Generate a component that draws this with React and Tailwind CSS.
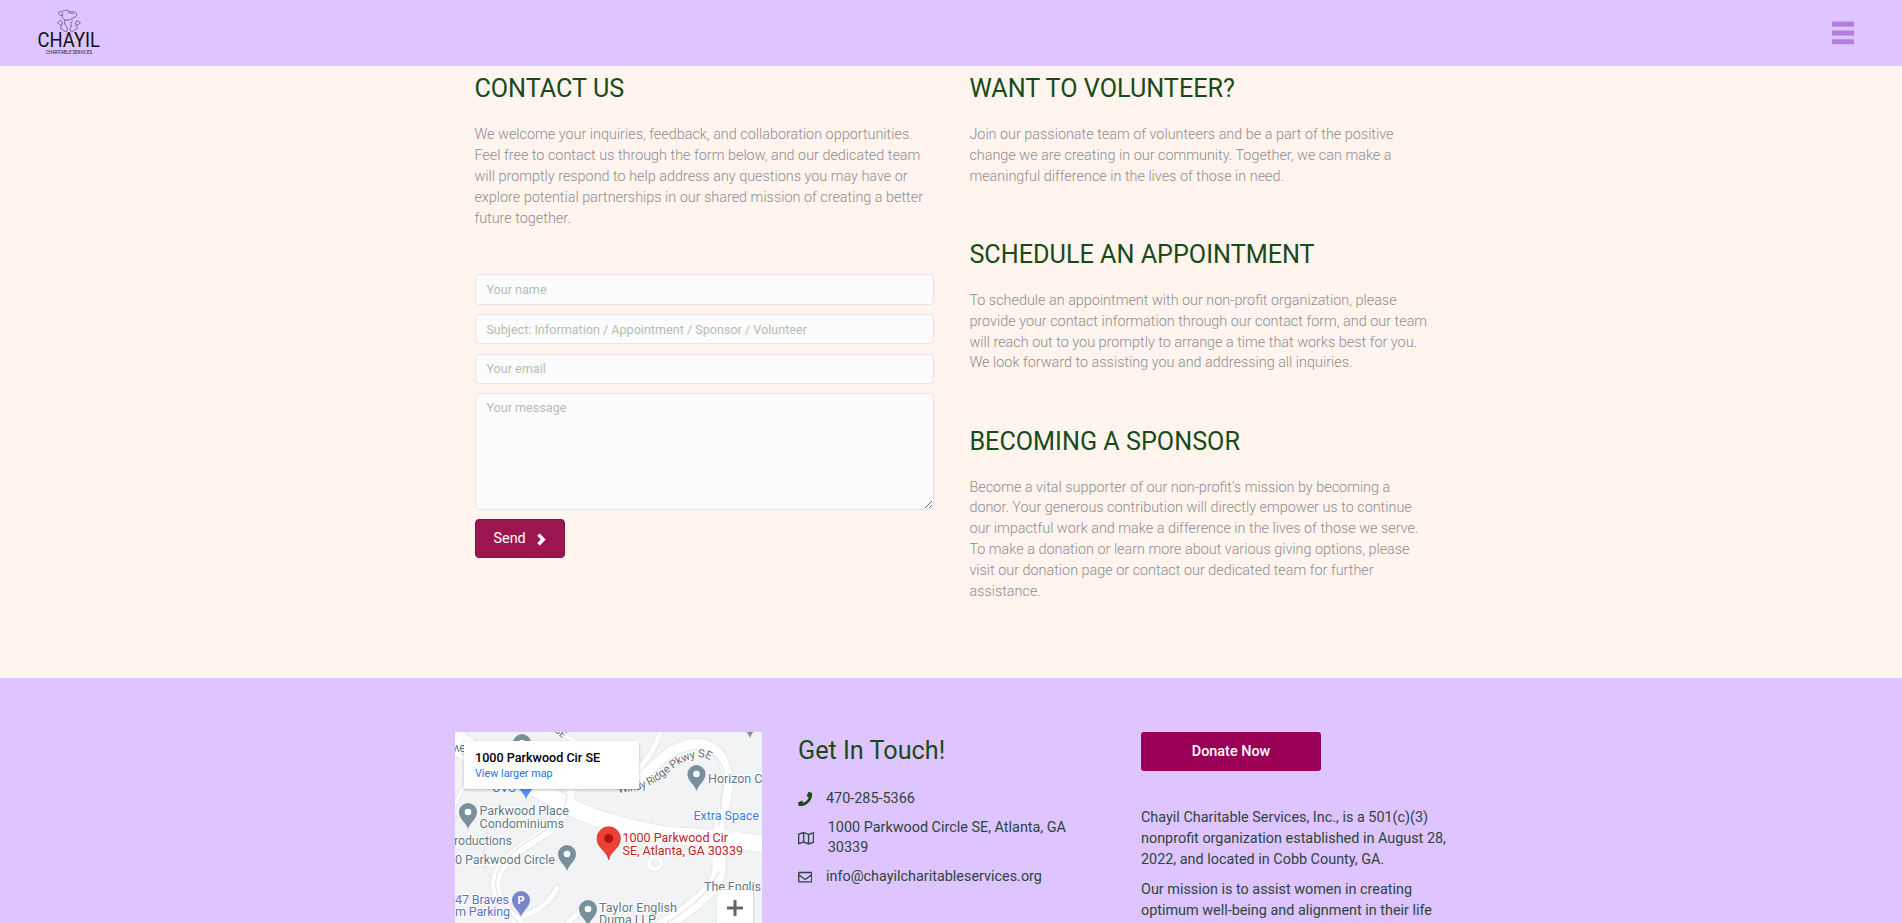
import React from "react";
import { FaPhone, FaRegMap, FaRegEnvelope } from "react-icons/fa";

const headingClass = "text-[25.2px] leading-[30px] text-[#194a19] whitespace-nowrap";
const copyClass = "pt-[21px] text-[14.4px] leading-[20.88px] font-light text-[#8e8e8e] whitespace-nowrap";
const fieldClass =
  "block w-full rounded-[4px] border border-[#e6e6e6] bg-[#fcfcfc] px-[10.4px] text-[12.6px] font-normal outline-none placeholder:text-[#b3bfb3] placeholder:opacity-100";

const contactCopy = [
  "We welcome your inquiries, feedback, and collaboration opportunities.",
  "Feel free to contact us through the form below, and our dedicated team",
  "will promptly respond to help address any questions you may have or",
  "explore potential partnerships in our shared mission of creating a better",
  "future together.",
];

const topics = [
  {
    title: "WANT TO VOLUNTEER?",
    lines: [
      "Join our passionate team of volunteers and be a part of the positive",
      "change we are creating in our community. Together, we can make a",
      "meaningful difference in the lives of those in need.",
    ],
  },
  {
    title: "SCHEDULE AN APPOINTMENT",
    lines: [
      "To schedule an appointment with our non-profit organization, please",
      "provide your contact information through our contact form, and our team",
      "will reach out to you promptly to arrange a time that works best for you.",
      "We look forward to assisting you and addressing all inquiries.",
    ],
  },
  {
    title: "BECOMING A SPONSOR",
    lines: [
      "Become a vital supporter of our non-profit's mission by becoming a",
      "donor. Your generous contribution will directly empower us to continue",
      "our impactful work and make a difference in the lives of those we serve.",
      "To make a donation or learn more about various giving options, please",
      "visit our donation page or contact our dedicated team for further",
      "assistance.",
    ],
  },
];

function TextBlock({ title, lines }) {
  return (
    <div>
      <h2 className={headingClass}>{title}</h2>
      <div className={copyClass}>
        {lines.map((line) => (
          <div key={line}>{line}</div>
        ))}
      </div>
    </div>
  );
}

function Logo() {
  return (
    <svg width="70" height="56" viewBox="34 4 70 56" fontFamily="Roboto, sans-serif">
      <g fill="none" stroke="#4a3d63" strokeWidth="0.7" strokeLinejoin="round">
        <path d="M62.500 15.500c-1.500.3-3.500-.5-4-2-.3-1.500 1.500-2.500 3-1.500.8-1 2.500-1.800 4.500-1.700 2 0 3.500.3 4.500 1.700 1.500-.8 3.500-.2 5.500.8.8.6.9 2.500.2 3.500-1.500 1.200-3.800 1.600-5.200 2.900-2 1.600-5.500 1.500-7.500-.2-1.200-1-1.500-2.200-1-3.500z" />
        <path d="M67.500 13.500c.8-1.700 3-1.500 3.300.1M71 14c.5-.8 2.500-.8 3 .3M62.500 15.500c.5-1.200.3-2-.5-3" />
        <path d="M65.500 19.800c-1.500 2.200-1.300 4 .5 6 1.500 1.800 2 3.500 1 5-1.500 1.500-3 .5-4-.8-1-1.200-2.800-.7-2.500-2.200l1-2.500c-1-.8-3-1-4-2.800.8-1.200 2.300-1.300 3.300-2.200.5 1 1.400 1.300 1.700 2.500l-1 2.500" />
        <path d="M72.800 20.300c-1.700 1.700-2.600 3.700-1.300 5.700-1.200 1.500-2.200 3.500-.8 4.800 1.500 1.500 3 .3 4-.8 1.200-1 3.200-.8 2.800-2.300l-1.300-2.300c1.200-.6 3-1 4.300-2.700-1-1-2.200-1-3.400-2-.8.800-1.500 1.200-1.700 2.400l.8 2.300" />
      </g>
      <text x="37.500" y="46.900" fontSize="19.400" textLength="62.500" lengthAdjust="spacingAndGlyphs" fill="#121016">CHAYIL</text>
      <text x="46" y="53.700" fontSize="4.700" textLength="46" lengthAdjust="spacingAndGlyphs" fill="#1d1726">CHARITABLE SERVICES</text>
    </svg>
  );
}

function Pin({ x, y, fill, letter }) {
  return (
    <g transform={`translate(${x} ${y})`}>
      <path d="M0 17.500C-.8 11.500-9 7.500-9 0a9 9 0 0 1 18 0C9 7.500.8 11.500 0 17.500z" fill={fill} />
      {letter ? (
        <text x="0" y="4" textAnchor="middle" fontSize="11" fontWeight="700" fill="#fff">{letter}</text>
      ) : (
        <circle r="3.300" fill="#fff" />
      )}
    </g>
  );
}

const roads = [
  { d: "M-6 2C30 24 60 45 84 58S130 84 154 90 200 103 221 104 280 107 312 113", w: 17 },
  { d: "M176 52C196 42 206 22 226 15S262 12 270 34 268 72 264 96V140", w: 10 },
  { d: "M264 100V138C262 156 240 176 196 200", w: 13 },
  { d: "M264 130V200", w: 9 },
  { d: "M206-2C202 12 196 22 185 36", w: 5 },
  { d: "M116 58C112 80 104 92 88 102S44 128 41 148 52 178 70 198", w: 9 },
  { d: "M102 156C94 172 84 178 64 186", w: 5 },
  { d: "M-4 18L8 26", w: 5 },
  { d: "M10 52L-3 78", w: 3 },
  { d: "M126 178L108 196", w: 5 },
  { d: "M104-3C110 6 124 10 132 18", w: 4 },
];

const placeLabels = [
  { t: "Parkwood Place", x: 24.500, y: 83.300, w: 89.500 },
  { t: "Condominiums", x: 24.500, y: 95.800, w: 84.500 },
  { t: "roductions", x: -1, y: 112.800, w: 58 },
  { t: "0 Parkwood Circle", x: 0, y: 131.800, w: 100 },
  { t: "Taylor English", x: 144, y: 180, w: 78 },
  { t: "Duma LLP", x: 144, y: 192, w: 57 },
  { t: "Horizon C", x: 253, y: 51, w: 54.500 },
  { t: "The Englis", x: 249, y: 159, w: 57 },
  { t: "we", x: -3, y: 20, w: 14 },
];

const haloProps = { stroke: "#ffffff", strokeWidth: 2, paintOrder: "stroke", strokeLinejoin: "round" };

function MapDrawing() {
  return (
    <svg className="block" width="307" height="191" viewBox="0 0 307 191" fontFamily="Roboto, sans-serif" fontSize="12.600">
      <rect width="307" height="191" fill="#f1f3f4" />
      <g fill="none" stroke="#e3e6e8" strokeWidth="1.200">
        <path d="M0 86c8-4 18-14 24-12s6 16 8 26-6 18-4 30 8 14 12 18" />
        <path d="M198 0v191M0 117h307" stroke="#eceeef" strokeWidth="0.800" />
      </g>
      <g fill="none" strokeLinejoin="round" strokeLinecap="round">
        {roads.map((r) => (
          <path key={r.d} d={r.d} stroke="#e2e5e8" strokeWidth={r.w + 1.500} />
        ))}
        <circle cx="200" cy="131" r="6" stroke="#e2e5e8" strokeWidth="5.500" />
        {roads.map((r) => (
          <path key={r.d} d={r.d} stroke="#ffffff" strokeWidth={r.w} />
        ))}
        <circle cx="200" cy="131" r="6" stroke="#ffffff" strokeWidth="4" />
        <path d="M112 62C110 82 102 92 86 101S43 128 41 148 52 178 70 198" stroke="#e2e5e8" strokeWidth="1.200" />
        <path d="M252 19C264 24 270 36 269 48S264 78 264 94M264 140C252 164 232 178 212 191" stroke="#e2e5e8" strokeWidth="1.200" />
      </g>

      <Pin x={67} y={11} fill="#78909c" />
      <Pin x={71} y={50} fill="#4f8ff7" />
      <Pin x={13} y={80} fill="#78909c" />
      <Pin x={112} y={122} fill="#78909c" />
      <Pin x={133} y={177} fill="#78909c" />
      <Pin x={241.500} y={42} fill="#78909c" />
      <Pin x={295} y={-11} fill="#78909c" />
      <Pin x={66} y={168} fill="#7986cb" letter="P" />

      <g fill="#607985" {...haloProps}>
        {placeLabels.map((l) => (
          <text key={l.t} x={l.x} y={l.y} textLength={l.w}>{l.t}</text>
        ))}
      </g>
      <g fill="#5f6fc4" {...haloProps}>
        <text x="0" y="171.500" textLength="54">47 Braves</text>
        <text x="0" y="184" textLength="55">m Parking</text>
      </g>
      <g fill="#2f80ee" {...haloProps}>
        <text x="238.500" y="88.300" textLength="65.500">Extra Space</text>
        <text x="37" y="60">CVS</text>
      </g>
      <path id="ridge-label" d="M163 61C188 59 198 53 209 44S229 28 240 26 252 27 264 33" fill="none" />
      <text fill="#686e73" fontSize="11.300" {...haloProps}>
        <textPath href="#ridge-label" textLength="102">Windy Ridge Pkwy SE</textPath>
      </text>
      <text fill="#686e73" fontSize="10" transform="translate(99 -1) rotate(42)" {...haloProps}>SE</text>

      <path d="M153.700 128c-.9-8.500-11.700-11.500-11.700-21.500a11.700 11.700 0 0 1 23.400 0c0 10-10.800 13-11.700 21.500z" fill="#ea4335" stroke="#c5221f" strokeWidth="0.600" />
      <circle cx="153.700" cy="106.500" r="4.500" fill="#b31412" />
      <g fill="#c5221f" {...haloProps}>
        <text x="167.500" y="110.300" textLength="105.500">1000 Parkwood Cir</text>
        <text x="167.500" y="122.800" textLength="120.500">SE, Atlanta, GA 30339</text>
      </g>
    </svg>
  );
}

function LocationMap() {
  return (
    <div className="relative h-[191px] w-[307px] shrink-0 overflow-hidden">
      <MapDrawing />
      <div className="absolute top-[9px] left-[9px] h-[48px] w-[175px] rounded-[2px] bg-white pt-[9px] pl-[11px] whitespace-nowrap shadow-[0_1px_3px_rgba(0,0,0,0.25)]">
        <div className="text-[12.6px] leading-[16px] font-medium text-black">1000 Parkwood Cir SE</div>
        <div className="text-[10.8px] leading-[15px] text-[#1a73e8]">View larger map</div>
      </div>
      <div className="absolute top-[158px] left-[262px] flex h-9 w-9 items-center justify-center rounded-[2px] bg-white shadow-[0_1px_3px_rgba(0,0,0,0.25)]">
        <svg width="16" height="16" viewBox="0 0 16 16">
          <path d="M8 0v16M0 8h16" stroke="#666" strokeWidth="3" />
        </svg>
      </div>
    </div>
  );
}

export default function App() {
  return (
    <div className="flex h-[923px] w-full flex-col overflow-hidden bg-[#fff4ee] font-['Roboto',sans-serif]">
      <header className="flex h-[66px] shrink-0 items-start justify-between bg-[#dec5ff]">
        <div className="pt-1 pl-[34px]">
          <Logo />
        </div>
        <button className="mt-[21px] mr-12 block">
          <svg className="block" width="22" height="24" viewBox="0 0 22 24" fill="#b57edc">
            <rect y="0.600" width="22" height="5.100" />
            <rect y="9.500" width="22" height="5.100" />
            <rect y="18.300" width="22" height="4.900" />
          </svg>
        </button>
      </header>

      <main className="flex h-[612px] shrink-0 justify-center pt-2">
        <div className="flex w-[992px] gap-9 pl-[19.4px]">
          <section className="w-[459.6px] shrink-0">
            <TextBlock title="CONTACT US" lines={contactCopy} />
            <form className="flex flex-col items-start gap-[9.3px] pt-[45px] pl-[0.6px]">
              <input className={fieldClass + " h-[30.3px]"} placeholder="Your name" />
              <input className={fieldClass + " h-[30.3px]"} placeholder="Subject: Information / Appointment / Sponsor / Volunteer" />
              <input className={fieldClass + " h-[30.3px]"} placeholder="Your email" />
              <textarea className={fieldClass + " h-[116.700px] resize pt-[5px] leading-[18.9px]"} placeholder="Your message" />
              <button type="button" className="flex h-[39px] w-[90px] items-center rounded-[4px] border border-[#86103f] bg-[#9b154e] pt-px pl-[17.5px] text-[14.4px] text-white">
                <span className="w-[43.5px] text-left">Send</span>
                <svg width="9" height="13" viewBox="0 0 9 13">
                  <path d="M1.500 1.600L6.200 6.500L1.500 11.400" fill="none" stroke="#fff" strokeWidth="3.500" />
                </svg>
              </button>
            </form>
          </section>
          <section className="-ml-[0.6px] flex flex-col gap-[52.2px]">
            {topics.map((topic) => (
              <TextBlock key={topic.title} {...topic} />
            ))}
          </section>
        </div>
      </main>

      <footer className="flex grow justify-center overflow-hidden bg-[#dec5ff] pt-[54px] text-[14.4px] leading-[20.4px] text-[#2b4640]">
        <div className="flex h-[191px] w-[992px] gap-9">
          <LocationMap />
          <div className="w-[307px] shrink-0 pt-[3.5px] whitespace-nowrap">
            <h2 className={headingClass}>Get In Touch!</h2>
            <div className="flex flex-col gap-[8.2px] pt-[23.5px]">
              <div className="flex items-center gap-[13.6px]">
                <FaPhone className="text-[#194a19]" />
                <span>470-285-5366</span>
              </div>
              <div className="flex items-center gap-[13.6px]">
                <FaRegMap className="h-[14.4px] w-[16.2px]" />
                <span>
                  1000 Parkwood Circle SE, Atlanta, GA
                  <br />
                  30339
                </span>
              </div>
              <div className="flex items-center gap-[13.6px]">
                <FaRegEnvelope />
                <span>info@chayilcharitableservices.org</span>
              </div>
            </div>
          </div>
          <div className="w-[307px] shrink-0 leading-[20.88px] whitespace-nowrap">
            <button className="block h-[39px] w-[180px] rounded-[3px] bg-[#990055] pt-px font-medium text-white">Donate Now</button>
            <div className="pt-[37.2px]">
              Chayil Charitable Services, Inc., is a 501(c)(3)
              <br />
              nonprofit organization established in August 28,
              <br />
              2022, and located in Cobb County, GA.
            </div>
            <div className="pt-[9.500px]">
              Our mission is to assist women in creating
              <br />
              optimum well-being and alignment in their life
            </div>
          </div>
        </div>
      </footer>
    </div>
  );
}
